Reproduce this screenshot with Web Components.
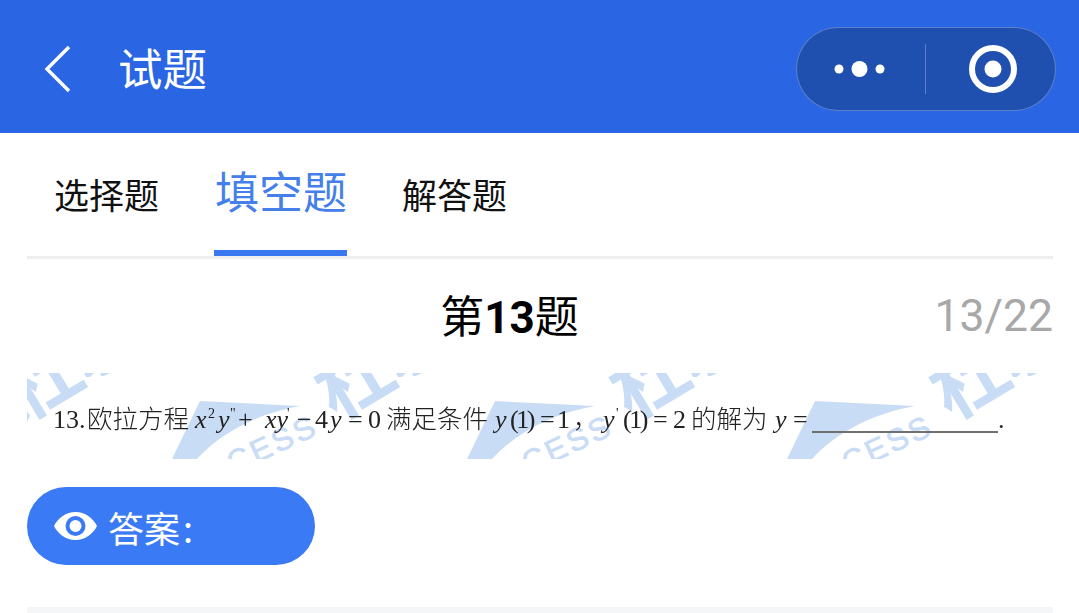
<!DOCTYPE html>
<html lang="zh"><head><meta charset="utf-8"><style>
html,body{margin:0;background:#fff}
body{width:1079px;height:613px;overflow:hidden;font-family:Roboto,"Noto Sans CJK SC",sans-serif}
</style></head><body>
<nav-bar title-text="试题"></nav-bar>
<tab-strip></tab-strip>
<question-head></question-head>
<question-image></question-image>
<answer-button></answer-button>
<foot-strip></foot-strip>
<script>
const def=(name,html,init)=>customElements.define(name,class extends HTMLElement{
  constructor(){super();this.attachShadow({mode:'open'}).innerHTML=html;if(init)init(this.shadowRoot);}
  connectedCallback(){const t=this.getAttribute('title-text');if(t)this.shadowRoot.querySelector('.t').textContent=t;}
});
def('nav-bar',`<style>
:host{display:flex;align-items:center;height:133px;background:#2a66e3;box-sizing:border-box;padding:4px 23px 0 44px;color:#fff}
svg{display:block}
.t{font-size:44.5px;margin-left:47px;line-height:1;flex:1;position:relative;top:3px}
.cap{width:260px;height:84px;box-sizing:border-box;border-radius:42px;background:#1f50b0;border:1.5px solid rgba(255,255,255,.28);display:flex;align-items:center}
.l,.r{flex:1;display:flex;align-items:center;justify-content:center;height:50px;box-sizing:border-box}
.l{border-right:1px solid rgba(255,255,255,.28);flex:0 0 129px;padding-right:3px}
.r{padding-left:5px}
</style>
<svg width="27" height="48" viewBox="0 0 27 48"><path d="M25 2 3 24l22 22" fill="none" stroke="#fff" stroke-width="3.4"/></svg>
<span class="t"></span>
<div class="cap"><div class="l"><svg width="52" height="18" viewBox="0 0 52 18" fill="#fff"><circle cx="5" cy="9" r="4.5"/><circle cx="25.5" cy="9" r="8"/><circle cx="46" cy="9" r="4.5"/></svg></div>
<div class="r"><svg width="50" height="50" viewBox="0 0 50 50"><circle cx="25" cy="25" r="21" fill="none" stroke="#fff" stroke-width="6"/><circle cx="25" cy="25" r="8.5" fill="#fff"/></svg></div></div>`);
def('tab-strip',`<style>
:host{display:flex;align-items:flex-end;height:126px;margin:0 26px 0 27px;box-sizing:border-box;border-bottom:3px solid #eeeff1;color:#111}
.tab{font-size:35px;line-height:1;height:100%;box-sizing:border-box;display:flex;align-items:center;padding-top:6px;white-space:nowrap}
.a{font-size:44px;color:#4580ea;position:relative;margin:0 55px;padding:0 0 2px 1px;width:133px}
.a::after{content:"";position:absolute;left:0;right:0;bottom:0;height:6px;background:#3a78ef}
.p{margin-left:27px}
</style><div class="tab p">选择题</div><div class="tab a">填空题</div><div class="tab">解答题</div>`);
def('question-head',`<style>
:host{display:flex;position:relative;justify-content:center;align-items:center;height:114px;margin:0 26px;color:#000;box-sizing:border-box;padding:4px 60px 0 0}
.h{font-size:44px;line-height:1}
b{font-weight:700}
.n{position:absolute;right:0;top:50%;transform:translateY(-50%);font-size:44.5px;line-height:1;color:#a8a8a8;font-weight:400}
</style><div class="h">第<b>13</b>题</div><div class="n">13/22</div>`);
const X=27;
const toks=[[53,'13.'],[87,'欧拉方程','c'],[195,'x','i'],[208,'2','s'],[218,'y','i'],[230,'"','s'],[238,'+'],[265,'xy','i'],[287,"'",'s'],[297,'−'],[315,'4'],[330,'y','i'],[348,'='],[368,'0'],[386,'满足条件','c'],[495,'y','i'],[510,'(1)','p'],[540,'='],[557,'1'],[573,'，','c'],[603,'y','i'],[616,"'",'s'],[623,'(1)','p'],[653,'='],[673,'2'],[691,'的解为','c'],[775,'y','i'],[793,'='],[812,'','u'],[998,'.']];
def('question-image',`<style>
:host{display:block;position:relative;height:86px;margin:0 26px 28px 27px;overflow:hidden;font-family:"Liberation Serif","Noto Sans CJK SC",serif;font-size:26px;color:#222;white-space:nowrap}
svg{position:absolute;left:0;top:0}
.q{position:relative;display:flex;align-items:baseline;height:86px;box-sizing:border-box;padding-top:28.5px;filter:blur(.25px)}
.q span{flex:none;line-height:1.2}
.i{font-style:italic}
.c{font-family:"Noto Sans CJK SC",sans-serif;font-weight:300;font-size:25.5px}
.s{font-size:14px;position:relative;top:-10px}
.p{letter-spacing:-2.5px}
.u{height:2.5px;background:#707070;position:relative;top:5.5px;width:186px}
</style>
<svg width="1026" height="86" viewBox="0 0 1026 86" fill="#c9dcf5" font-family="'Noto Sans CJK SC',sans-serif" font-weight="700">
<defs><g id="w">
<path d="M173 28 273 33C228 41 193 61 170 86H145Z"/>
<text x="206" y="101" font-size="31" letter-spacing="3" stroke="#c9dcf5" stroke-width=".7" transform="rotate(-25 206 101)" font-family="'Liberation Sans',sans-serif" font-weight="400">CESS</text>
<text x="309" y="48.5" font-size="75" transform="rotate(-31 309 48.5)">杜</text>
<path d="M369 0h10l-4 4h-4zM385 0h10l-6 3h-3z"/>
</g></defs>
<use href="#w" x="-312"/><use href="#w"/><use href="#w" x="295"/><use href="#w" x="615"/>
<path d="M0 38 3 43 0 49Z"/>
</svg>
<div class="q"></div>`,root=>{
  const q=root.querySelector('.q');
  toks.forEach((t,i)=>{const s=document.createElement('span');s.textContent=t[1];if(t[2])s.className=t[2];
    if(i==0)s.style.marginLeft=(t[0]-X)+'px';
    if(i<toks.length-1&&t[2]!=='u')s.style.width=(toks[i+1][0]-t[0])+'px';
    q.appendChild(s);});
});
def('answer-button',`<style>
:host{display:flex;align-items:center;width:288px;height:78px;margin-left:27px;border-radius:39px;background:#3a7af5;color:#fff;box-sizing:border-box;padding-left:27px;font-size:36px;font-family:"Noto Sans CJK SC",sans-serif}
svg{display:block;margin-right:11px}
span{line-height:1;position:relative;top:1px}
.k{margin-left:3px;top:0}
</style><svg width="43" height="30" viewBox="0 0 43 30"><path fill="#fff" fill-rule="evenodd" d="M21.5 1C31 1 39 7 43 15 39 23 31 29 21.5 29S4 23 0 15C4 7 12 1 21.5 1ZM21.5 5a10 10 0 1 0 0 20 10 10 0 0 0 0-20ZM21.5 9a6 6 0 1 1 0 12 6 6 0 0 1 0-12Z"/></svg><span>答案<span class="k">:</span></span>`);
def('foot-strip',`<style>:host{display:block;height:6px;margin:42px 26px 0 27px;background:#f5f6f8}</style>`);
</script></body></html>
